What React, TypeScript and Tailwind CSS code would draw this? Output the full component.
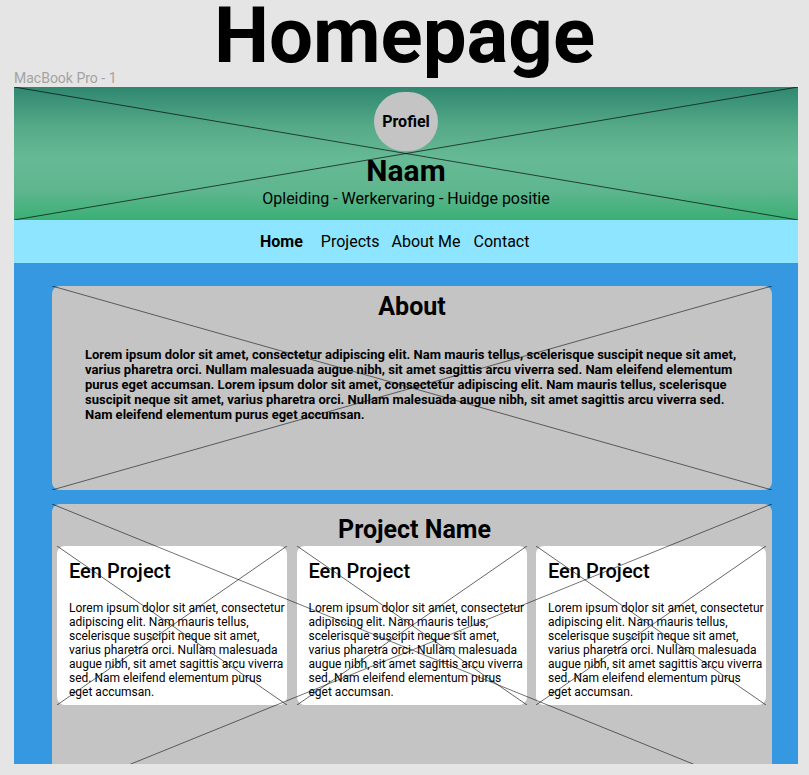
import React from "react";

function Cross({ color = "#000", opacity = 0.6 }: { color?: string; opacity?: number }) {
  return (
    <svg
      className="absolute inset-0 w-full h-full pointer-events-none"
      viewBox="0 0 100 100"
      preserveAspectRatio="none"
    >
      <line x1="0" y1="0" x2="100" y2="100" stroke={color} strokeOpacity={opacity} strokeWidth="1" vectorEffect="non-scaling-stroke" />
      <line x1="100" y1="0" x2="0" y2="100" stroke={color} strokeOpacity={opacity} strokeWidth="1" vectorEffect="non-scaling-stroke" />
    </svg>
  );
}

const lorem =
  "Lorem ipsum dolor sit amet, consectetur adipiscing elit. Nam mauris tellus, scelerisque suscipit neque sit amet, varius pharetra orci. Nullam malesuada augue nibh, sit amet sagittis arcu viverra sed. Nam eleifend elementum purus eget accumsan.";

function ProjectCard() {
  return (
    <div className="relative w-[230px] h-[159px] bg-white rounded-[8px] pl-[12px] pt-[13px]">
      <div className="text-[20px] leading-[24px] font-medium text-black">Een Project</div>
      <p className="mt-[18px] text-[12px] leading-[14px] text-black">{lorem}</p>
      <Cross opacity={0.6} />
    </div>
  );
}

export default function App() {
  return (
    <div className="w-[809px] h-[775px] bg-[#e5e5e5] overflow-hidden flex flex-col font-['Roboto',sans-serif]">
      <div className="h-[69px] shrink-0 flex flex-col items-center">
        <div className="mt-[-10px] text-[78px] leading-[91px] font-bold text-black whitespace-nowrap">Homepage</div>
      </div>
      <div className="h-[18px] shrink-0 pl-[14px] text-[14px] leading-[18px] text-[#a3a3a3]">MacBook Pro - 1</div>
      <div className="relative shrink-0 ml-[14px] w-[784px] h-[677px] overflow-hidden bg-[#3598e0]">
        <header className="relative h-[133px] bg-[linear-gradient(180deg,#2f8770_0%,#56aa88_30%,#66ba95_55%,#5eb68e_78%,#3aaf74_100%)] flex flex-col items-center pt-[5px]">
          <div className="w-[64px] h-[59px] rounded-full bg-[#c4c4c4] flex items-center justify-center">
            <span className="text-[16px] font-bold text-black">Profiel</span>
          </div>
          <div className="mt-[2px] text-[30px] leading-[36px] font-bold text-black">Naam</div>
          <div className="text-[16px] leading-[20px] text-black">Opleiding - Werkervaring - Huidge positie</div>
          <Cross opacity={0.65} />
        </header>
        <nav className="h-[43px] bg-[#8ee5ff] flex items-center pl-[246px] text-[16px] text-black">
          <span className="font-bold mr-[18px]">Home</span>
          <span className="mr-[12px]">Projects</span>
          <span className="mr-[13px]">About Me</span>
          <span>Contact</span>
        </nav>
        <main className="pl-[38px] pt-[23px] flex flex-col gap-[14px]">
          <section className="relative w-[720px] h-[204px] bg-[#c4c4c4] rounded-[8px] pt-[6px] px-[33px]">
            <h2 className="text-center text-[25px] leading-[30px] font-bold text-black">About</h2>
            <p className="mt-[25px] text-[13px] leading-[15px] font-bold text-black">
              Lorem ipsum dolor sit amet, consectetur adipiscing elit. Nam mauris tellus, scelerisque suscipit neque sit amet, varius pharetra orci. Nullam malesuada augue nibh, sit amet sagittis arcu viverra sed. Nam eleifend elementum purus eget accumsan. Lorem ipsum dolor sit amet, consectetur adipiscing elit. Nam mauris tellus, scelerisque suscipit neque sit amet, varius pharetra orci. Nullam malesuada augue nibh, sit amet sagittis arcu viverra sed. Nam eleifend elementum purus eget accumsan.
            </p>
            <Cross opacity={0.55} />
          </section>
          <section className="relative w-[720px] h-[292px] bg-[#c4c4c4] rounded-[8px] pt-[11px] pl-[5px]">
            <h2 className="text-center text-[25px] leading-[30px] font-bold text-black">Project Name</h2>
            <div className="mt-[1px] flex gap-[9.5px]">
              <ProjectCard />
              <ProjectCard />
              <ProjectCard />
            </div>
            <Cross opacity={0.55} />
          </section>
        </main>
      </div>
    </div>
  );
}
